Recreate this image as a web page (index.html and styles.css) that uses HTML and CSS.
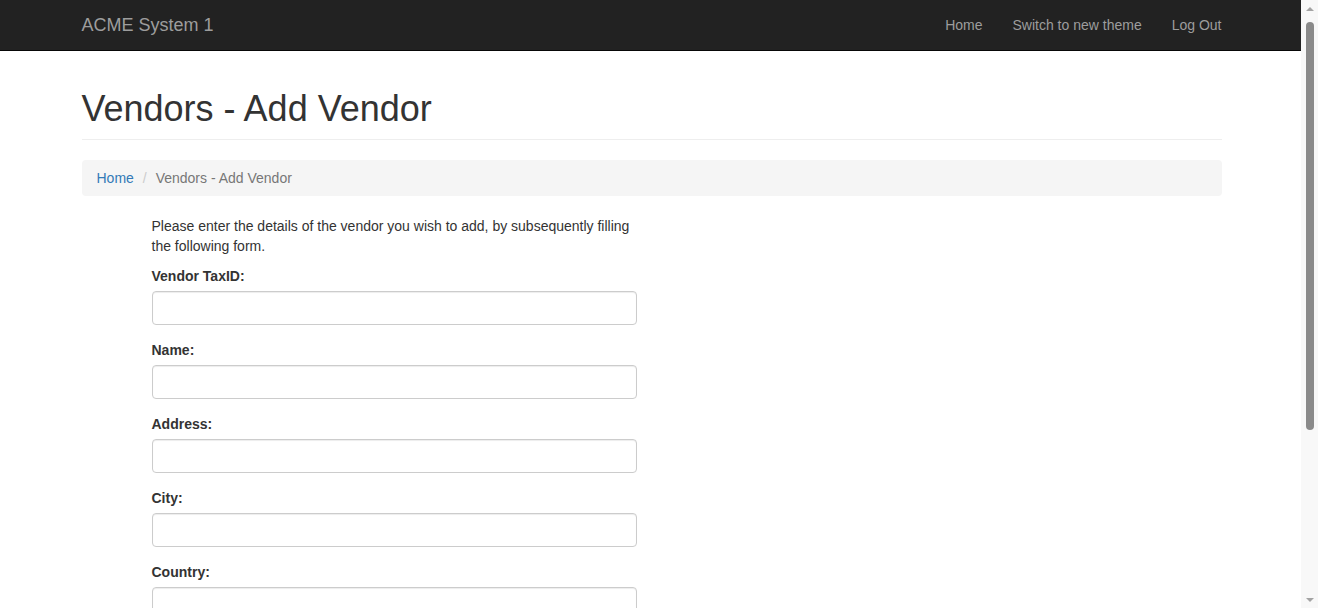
FILE: index.html
```html
<!DOCTYPE html>
<html lang="en">
<head>
<meta charset="utf-8">
<title>Vendors - Add Vendor</title>
<link rel="stylesheet" href="styles.css">
</head>
<body>
<div class="window">
  <div class="viewport">
    <nav class="navbar">
      <div class="container nav-inner">
        <a class="brand" href="#">ACME System 1</a>
        <ul class="nav-links">
          <li><a href="#">Home</a></li>
          <li><a href="#">Switch to new theme</a></li>
          <li><a href="#">Log Out</a></li>
        </ul>
      </div>
    </nav>
    <main class="container">
      <div class="page-header">
        <h1>Vendors - Add Vendor</h1>
      </div>
      <ol class="breadcrumb">
        <li><a href="#">Home</a></li>
        <li class="active">Vendors - Add Vendor</li>
      </ol>
      <form class="vendor-form">
        <p>Please enter the details of the vendor you wish to add, by subsequently filling the following form.</p>
        <div class="form-group">
          <label for="taxid">Vendor TaxID:</label>
          <input id="taxid" class="form-control" type="text">
        </div>
        <div class="form-group">
          <label for="name">Name:</label>
          <input id="name" class="form-control" type="text">
        </div>
        <div class="form-group">
          <label for="address">Address:</label>
          <input id="address" class="form-control" type="text">
        </div>
        <div class="form-group">
          <label for="city">City:</label>
          <input id="city" class="form-control" type="text">
        </div>
        <div class="form-group">
          <label for="country">Country:</label>
          <input id="country" class="form-control" type="text">
        </div>
      </form>
    </main>
  </div>
  <div class="scrollbar">
    <div class="sb-arrow sb-up"></div>
    <div class="sb-track"><div class="sb-thumb"></div></div>
    <div class="sb-arrow sb-down"></div>
  </div>
</div>
</body>
</html>
```
FILE: styles.css
```css
* { box-sizing: border-box; }
html, body {
  margin: 0;
  padding: 0;
  height: 608px;
  overflow: hidden;
}
body {
  font-family: "Liberation Sans", Arial, Helvetica, sans-serif;
  font-size: 14px;
  line-height: 20px;
  color: #333;
  background: #fff;
}
a { text-decoration: none; }

.window {
  display: flex;
  height: 608px;
}
.viewport {
  flex: 1;
  min-width: 0;
  overflow: hidden;
}

.container {
  width: 1170px;
  margin-left: calc(50% - 584px);
  padding: 0 15px;
}

/* navbar */
.navbar {
  background: #222;
  border-bottom: 1px solid #080808;
  height: 51px;
}
.nav-inner {
  display: flex;
  justify-content: space-between;
  align-items: stretch;
  height: 50px;
}
.brand {
  color: #9d9d9d;
  font-size: 18px;
  line-height: 20px;
  padding: 15px 0;
}
.nav-links {
  list-style: none;
  margin: 0;
  padding: 0;
  display: flex;
}
.nav-links a {
  display: block;
  color: #9d9d9d;
  padding: 15px;
  line-height: 20px;
}
.nav-links li:last-child a { padding-right: 0; }

/* header */
.page-header {
  margin: 38px 0 20px;
  padding-bottom: 10px;
  border-bottom: 1px solid #eee;
}
.page-header h1 {
  font-family: inherit;
  font-weight: 500;
  font-size: 36px;
  line-height: 1.1;
  margin: 0;
  color: #333;
}

/* breadcrumb */
.breadcrumb {
  list-style: none;
  margin: 0 0 20px;
  padding: 8px 15px;
  background: #f5f5f5;
  border-radius: 4px;
  display: flex;
}
.breadcrumb a { color: #337ab7; }
.breadcrumb li + li { margin-left: 4px; }
.breadcrumb li + li::before {
  content: "/\00a0";
  padding: 0 5px;
  color: #ccc;
}
.breadcrumb .active { color: #777; }

/* form */
.vendor-form {
  margin-left: 70px;
  width: 486px;
}
.vendor-form p {
  margin: 0 0 10px;
}
.form-group {
  margin-bottom: 15px;
}
.form-group label {
  display: block;
  font-weight: bold;
  margin-bottom: 5px;
  line-height: 20px;
}
.form-control {
  display: block;
  width: 485px;
  height: 34px;
  padding: 6px 12px;
  font: inherit;
  color: #555;
  background: #fff;
  border: 1px solid #ccc;
  border-radius: 4px;
  box-shadow: inset 0 1px 1px rgba(0,0,0,.075);
  margin: 0;
}

/* scrollbar */
.scrollbar {
  width: 17px;
  flex: 0 0 17px;
  background: #f8f8f8;
  display: flex;
  flex-direction: column;
  align-items: center;
}
.sb-arrow {
  height: 17px;
  width: 17px;
  display: flex;
  align-items: center;
  justify-content: center;
}
.sb-up::before,
.sb-down::before {
  content: "";
  width: 0;
  height: 0;
  border-left: 4px solid transparent;
  border-right: 4px solid transparent;
}
.sb-up::before { border-bottom: 4px solid #a3a3a3; }
.sb-down::before { border-top: 4px solid #a3a3a3; }
.sb-track {
  flex: 1;
  width: 17px;
  display: flex;
  justify-content: center;
  padding-top: 5px;
}
.sb-thumb {
  width: 8px;
  height: 408px;
  background: #8a8a8a;
  border-radius: 4px;
}
```
